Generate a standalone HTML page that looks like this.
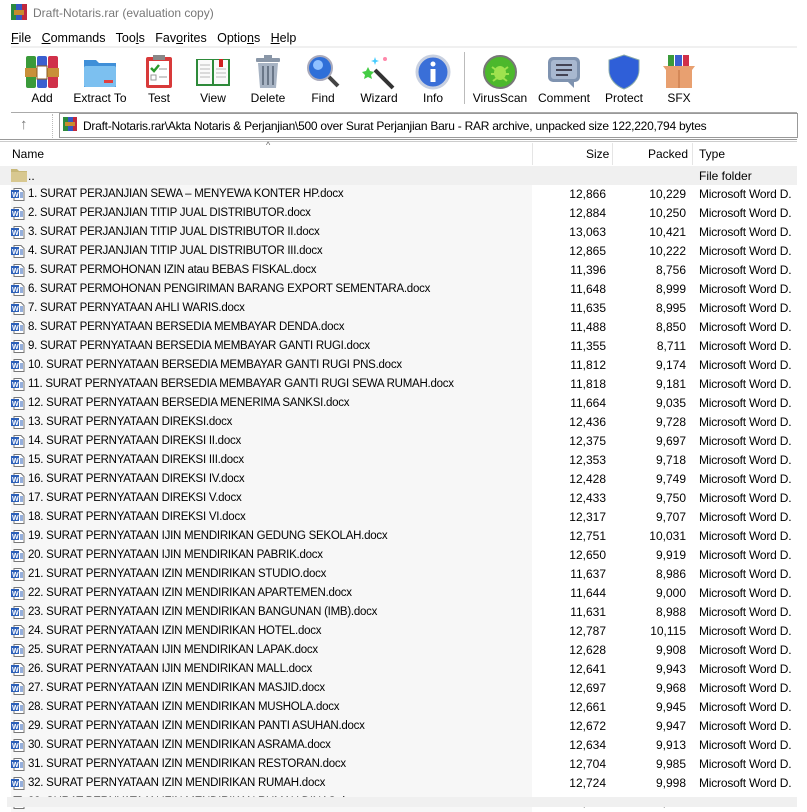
<!DOCTYPE html><html><head><style>
body{margin:0;width:807px;height:807px;overflow:hidden;background:#fff;font-family:"Liberation Sans",sans-serif;font-size:12px;color:#000;position:relative}
.a{position:absolute;white-space:nowrap}
.lbl{position:absolute;top:91px;font-size:12px;transform:translateX(-50%);white-space:nowrap}
.ic{position:absolute;top:54px;width:36px;height:36px;transform:translateX(-50%)}
.row{position:absolute;left:0;width:797px;height:19px;line-height:19px}
.row .n{position:absolute;left:11px;width:521px;height:19px;background:#f7f7f7;font-size:11.5px;letter-spacing:-0.25px}
.row .n span{position:absolute;left:17px}
.w{position:absolute;left:0;top:3px;width:14px;height:13px}
.s{position:absolute;right:191px}
.p{position:absolute;right:111px}
.t{position:absolute;left:699px;letter-spacing:-0.2px}
</style></head><body>
<svg class="a" style="left:11px;top:4px" width="16" height="16"><rect x="0" y="0" width="5" height="16" fill="#2b8a3e"/><rect x="5" y="0" width="6" height="16" fill="#3459c4"/><rect x="11" y="0" width="5" height="16" fill="#c0283d"/><rect x="3" y="6" width="10" height="5" fill="#c88b2d"/></svg>
<div class="a" style="left:33px;top:6px;font-size:12px;color:#777">Draft-Notaris.rar (evaluation copy)</div>
<div class="a" style="left:11px;top:31px;font-size:12.5px"><u>F</u>ile&nbsp;&nbsp; <u>C</u>ommands&nbsp;&nbsp; Too<u>l</u>s&nbsp;&nbsp; Fav<u>o</u>rites&nbsp;&nbsp; Optio<u>n</u>s&nbsp;&nbsp; <u>H</u>elp</div>
<div class="a" style="left:11px;top:46px;width:786px;height:2px;background:#f0f0f0"></div>
<svg class="ic" style="left:42px" viewBox="0 0 36 36"><rect x="2" y="2" width="10" height="32" rx="2" fill="#3a9a3a"/><rect x="13" y="2" width="10" height="32" rx="2" fill="#3b5fcf"/><rect x="24" y="2" width="10" height="32" rx="2" fill="#d0304a"/><rect x="1" y="14" width="34" height="9" fill="#c8903a"/><rect x="13" y="12" width="10" height="13" fill="#fff" stroke="#8a5a20"/></svg>
<svg class="ic" style="left:100px" viewBox="0 0 36 36"><path d="M2 6h12l3 3h17v24H2z" fill="#3f8fd8"/><rect x="2" y="12" width="32" height="21" rx="2" fill="#7cc0f0"/><rect x="22" y="26" width="9" height="3" fill="#e04040"/></svg>
<svg class="ic" style="left:159px" viewBox="0 0 36 36"><rect x="5" y="3" width="26" height="31" rx="2" fill="#d83a3a"/><rect x="8" y="7" width="20" height="24" fill="#fff"/><rect x="12" y="1" width="12" height="5" fill="#888"/><path d="M10 14l3 3 5-6" stroke="#2a9a2a" stroke-width="2.5" fill="none"/><rect x="10" y="21" width="5" height="5" fill="none" stroke="#999"/><path d="M18 15h8M18 23h8" stroke="#999"/></svg>
<svg class="ic" style="left:213px" viewBox="0 0 36 36"><rect x="1" y="5" width="34" height="27" fill="#2e8a3a"/><rect x="3" y="6" width="14" height="24" fill="#fafafa"/><rect x="19" y="6" width="14" height="24" fill="#fafafa"/><path d="M5 11h10M5 15h10M5 19h10M5 23h10M21 15h10M21 19h10M21 23h10" stroke="#bbb"/><rect x="24" y="5" width="4" height="8" fill="#d02020"/></svg>
<svg class="ic" style="left:268px" viewBox="0 0 36 36"><rect x="6" y="4" width="24" height="4" rx="1" fill="#8a97a8"/><rect x="14" y="1" width="8" height="4" fill="#8a97a8"/><path d="M8 9h20l-2 25H10z" fill="#a8b4c4"/><path d="M13 12v19M18 12v19M23 12v19" stroke="#6a7788" stroke-width="2"/></svg>
<svg class="ic" style="left:323px" viewBox="0 0 36 36"><circle cx="15" cy="14" r="12" fill="#2f6fd8" stroke="#aab" stroke-width="2"/><circle cx="13" cy="11" r="5" fill="#8fc0ff"/><path d="M24 23l9 9" stroke="#444" stroke-width="4"/></svg>
<svg class="ic" style="left:379px" viewBox="0 0 36 36"><path d="M14 16l18 18" stroke="#333" stroke-width="4"/><path d="M7 13l2 4 4 1-3 3 1 4-4-2-4 2 1-4-3-3 4-1z" fill="#4c4"/><path d="M14 3l1 3 3 1-3 1-1 3-1-3-3-1 3-1z" fill="#4cf"/><circle cx="24" cy="5" r="2" fill="#f8a"/></svg>
<svg class="ic" style="left:433px" viewBox="0 0 36 36"><circle cx="18" cy="18" r="16" fill="#3a6fd8" stroke="#c8d0e0" stroke-width="3"/><circle cx="18" cy="10" r="2.5" fill="#fff"/><rect x="15.5" y="15" width="5" height="13" fill="#fff"/></svg>
<div class="a" style="left:464px;top:52px;width:1px;height:52px;background:#bbb"></div>
<svg class="ic" style="left:500px" viewBox="0 0 36 36"><circle cx="18" cy="18" r="16" fill="#4cb82c" stroke="#777" stroke-width="2"/><ellipse cx="18" cy="19" rx="6" ry="7" fill="#9ee24e"/><path d="M10 13l4 3M26 13l-4 3M9 20h4M27 20h-4M11 27l4-3M25 27l-4-3" stroke="#9ee24e" stroke-width="2"/></svg>
<svg class="ic" style="left:564px" viewBox="0 0 36 36"><rect x="2" y="3" width="32" height="25" rx="5" fill="#7f93b0"/><rect x="5" y="6" width="26" height="19" rx="3" fill="#a8b8d0"/><path d="M10 11h16M10 16h16M10 21h12" stroke="#445" stroke-width="2"/><path d="M22 28l6 6v-6z" fill="#7f93b0"/></svg>
<svg class="ic" style="left:624px" viewBox="0 0 36 36"><path d="M18 1l15 5v10c0 9-7 16-15 19C10 32 3 25 3 16V6z" fill="#2f5fd8" stroke="#8aa" stroke-width="1"/></svg>
<svg class="ic" style="left:679px" viewBox="0 0 36 36"><rect x="7" y="1" width="6" height="16" fill="#3a9a3a"/><rect x="14" y="1" width="7" height="16" fill="#3b5fcf"/><rect x="22" y="1" width="6" height="16" fill="#d0304a"/><path d="M2 12h32l-3 4v18H5V16z" fill="#e8a070"/><path d="M18 16v18" stroke="#c07040"/></svg>
<div class="lbl" style="left:42px">Add</div><div class="lbl" style="left:100px">Extract To</div><div class="lbl" style="left:159px">Test</div><div class="lbl" style="left:213px">View</div><div class="lbl" style="left:268px">Delete</div><div class="lbl" style="left:323px">Find</div><div class="lbl" style="left:379px">Wizard</div><div class="lbl" style="left:433px">Info</div><div class="lbl" style="left:500px">VirusScan</div><div class="lbl" style="left:564px">Comment</div><div class="lbl" style="left:624px">Protect</div><div class="lbl" style="left:679px">SFX</div>
<div class="a" style="left:11px;top:112px;width:786px;height:1px;background:#aaa"></div>
<div class="a" style="left:20px;top:116px;font-size:15px;color:#777">↑</div>
<div class="a" style="left:52px;top:114px;height:24px;border-left:1px dotted #bbb"></div>
<div class="a" style="left:59px;top:113px;width:737px;height:23px;border:1px solid #999;background:#fff"></div>
<svg class="a" style="left:63px;top:117px" width="14" height="14"><rect width="5" height="14" fill="#2b8a3e"/><rect x="5" width="5" height="14" fill="#3459c4"/><rect x="10" width="4" height="14" fill="#c0283d"/><rect x="2" y="5" width="10" height="4" fill="#c88b2d"/></svg>
<div class="a" style="left:83px;top:119px;letter-spacing:-0.25px">Draft-Notaris.rar\Akta Notaris &amp; Perjanjian\500 over Surat Perjanjian Baru - RAR archive, unpacked size 122,220,794 bytes</div>
<div class="a" style="left:0;top:139px;width:797px;height:1px;background:#999"></div>
<div class="a" style="left:0;top:141px;width:797px;height:1px;background:#ccc"></div>
<div class="a" style="left:266px;top:140px;font-size:9px;color:#666">^</div>
<div class="a" style="left:12px;top:147px">Name</div>
<div class="a" style="left:532px;top:143px;width:1px;height:22px;background:#e5e5e5"></div>
<div class="a" style="left:612px;top:143px;width:1px;height:22px;background:#e5e5e5"></div>
<div class="a" style="left:692px;top:143px;width:1px;height:22px;background:#e5e5e5"></div>
<div class="a" style="left:586px;top:147px">Size</div>
<div class="a" style="left:648px;top:147px">Packed</div>
<div class="a" style="left:699px;top:147px">Type</div>
<div class="a" style="left:0;top:166px;width:797px;height:19px;background:#f0f0f0"></div>
<svg class="a" style="left:11px;top:169px" width="16" height="13"><path d="M0 0h6l2 2h8v11H0z" fill="#c8b878"/><rect y="3" width="16" height="10" fill="#d8c890"/></svg>
<div class="a" style="left:28px;top:169px">..</div>
<div class="a" style="left:699px;top:169px">File folder</div>
<div id="rows"></div>
<div class="a" style="left:7px;top:797px;width:790px;height:10px;background:#f0f0f0"></div>
<script>
const d=[["1. SURAT PERJANJIAN SEWA – MENYEWA KONTER HP.docx","12,866","10,229"],["2. SURAT PERJANJIAN TITIP JUAL DISTRIBUTOR.docx","12,884","10,250"],["3. SURAT PERJANJIAN TITIP JUAL DISTRIBUTOR II.docx","13,063","10,421"],["4. SURAT PERJANJIAN TITIP JUAL DISTRIBUTOR III.docx","12,865","10,222"],["5. SURAT PERMOHONAN IZIN atau BEBAS FISKAL.docx","11,396","8,756"],["6. SURAT PERMOHONAN PENGIRIMAN BARANG EXPORT SEMENTARA.docx","11,648","8,999"],["7. SURAT PERNYATAAN AHLI WARIS.docx","11,635","8,995"],["8. SURAT PERNYATAAN BERSEDIA MEMBAYAR DENDA.docx","11,488","8,850"],["9. SURAT PERNYATAAN BERSEDIA MEMBAYAR GANTI RUGI.docx","11,355","8,711"],["10. SURAT PERNYATAAN BERSEDIA MEMBAYAR GANTI RUGI PNS.docx","11,812","9,174"],["11. SURAT PERNYATAAN BERSEDIA MEMBAYAR GANTI RUGI SEWA RUMAH.docx","11,818","9,181"],["12. SURAT PERNYATAAN BERSEDIA MENERIMA SANKSI.docx","11,664","9,035"],["13. SURAT PERNYATAAN DIREKSI.docx","12,436","9,728"],["14. SURAT PERNYATAAN DIREKSI II.docx","12,375","9,697"],["15. SURAT PERNYATAAN DIREKSI III.docx","12,353","9,718"],["16. SURAT PERNYATAAN DIREKSI IV.docx","12,428","9,749"],["17. SURAT PERNYATAAN DIREKSI V.docx","12,433","9,750"],["18. SURAT PERNYATAAN DIREKSI VI.docx","12,317","9,707"],["19. SURAT PERNYATAAN IJIN MENDIRIKAN GEDUNG SEKOLAH.docx","12,751","10,031"],["20. SURAT PERNYATAAN IJIN MENDIRIKAN PABRIK.docx","12,650","9,919"],["21. SURAT PERNYATAAN IZIN MENDIRIKAN STUDIO.docx","11,637","8,986"],["22. SURAT PERNYATAAN IZIN MENDIRIKAN APARTEMEN.docx","11,644","9,000"],["23. SURAT PERNYATAAN IZIN MENDIRIKAN BANGUNAN (IMB).docx","11,631","8,988"],["24. SURAT PERNYATAAN IZIN MENDIRIKAN HOTEL.docx","12,787","10,115"],["25. SURAT PERNYATAAN IJIN MENDIRIKAN LAPAK.docx","12,628","9,908"],["26. SURAT PERNYATAAN IJIN MENDIRIKAN MALL.docx","12,641","9,943"],["27. SURAT PERNYATAAN IZIN MENDIRIKAN MASJID.docx","12,697","9,968"],["28. SURAT PERNYATAAN IZIN MENDIRIKAN MUSHOLA.docx","12,661","9,945"],["29. SURAT PERNYATAAN IZIN MENDIRIKAN PANTI ASUHAN.docx","12,672","9,947"],["30. SURAT PERNYATAAN IZIN MENDIRIKAN ASRAMA.docx","12,634","9,913"],["31. SURAT PERNYATAAN IZIN MENDIRIKAN RESTORAN.docx","12,704","9,985"],["32. SURAT PERNYATAAN IZIN MENDIRIKAN RUMAH.docx","12,724","9,998"],["33. SURAT PERNYATAAN IZIN MENDIRIKAN RUMAH DINAS.docx","12,677","9,960"]];
let h="";const wi='<svg class="w" viewBox="0 0 14 13"><path d="M3 0.5h7l3 3v9H3z" fill="#fff" stroke="#777"/><rect x="0" y="2" width="8" height="8" fill="#2b5fb8"/><text x="1" y="9" font-size="7" fill="#fff" font-family="Liberation Sans" font-weight="bold">W</text><path d="M9 5h3M9 7h3M9 9h3" stroke="#2b5fb8"/></svg>';
d.forEach((r,i)=>{h+=`<div class="row" style="top:${185+i*19}px"><div class="n">${wi}<span>${r[0]}</span></div><span class="s">${r[1]}</span><span class="p">${r[2]}</span><span class="t">Microsoft Word D.</span></div>`});
document.getElementById('rows').innerHTML=h;
</script>
</body></html>
